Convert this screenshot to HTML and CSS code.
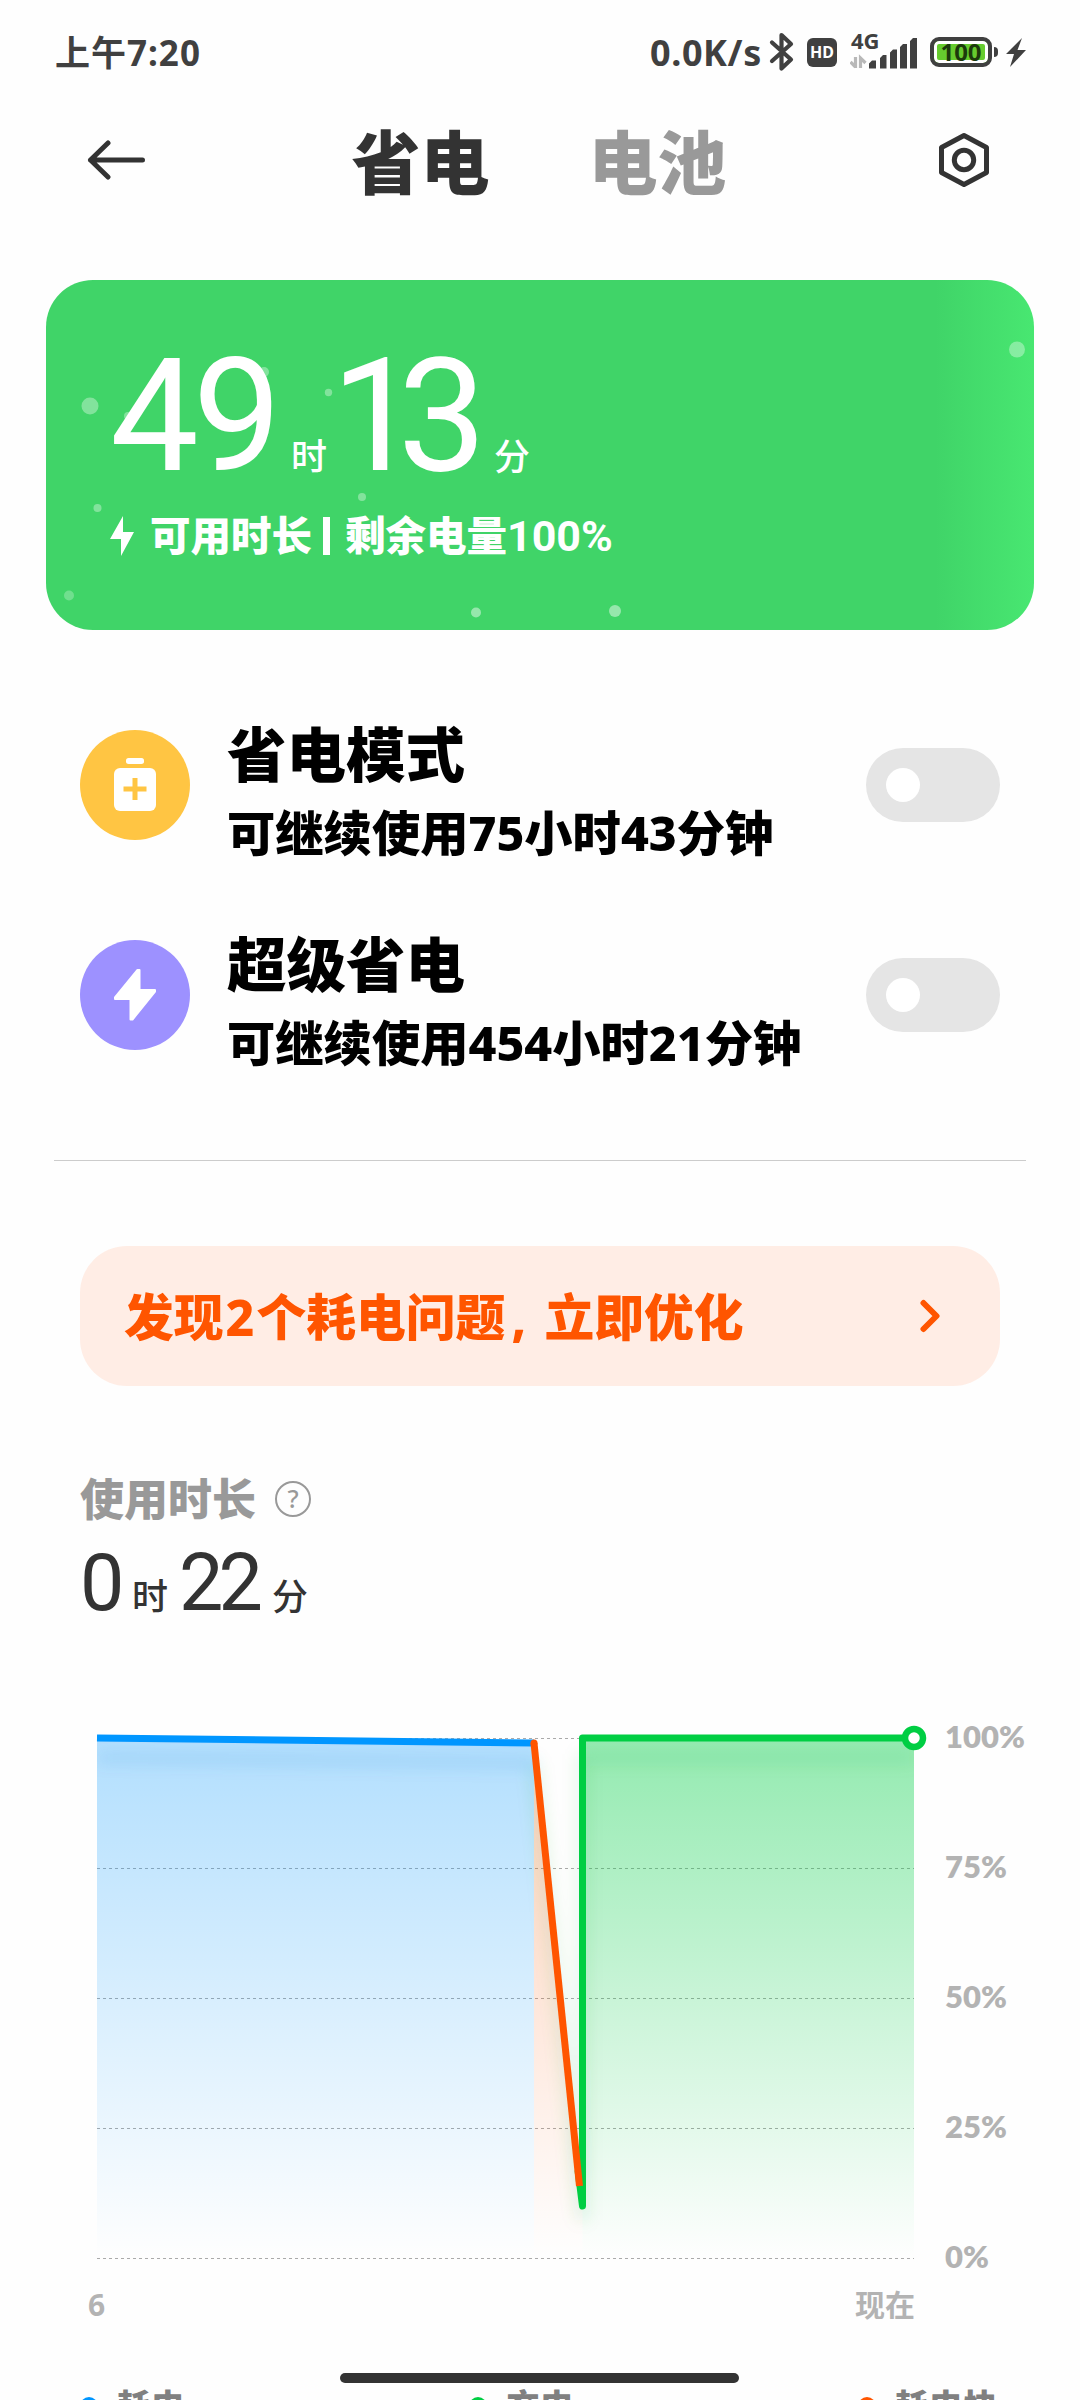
FILE: index.html
```html
<!DOCTYPE html>
<html lang="zh-CN">
<head>
    <meta charset="UTF-8">
    <meta name="viewport" content="width=device-width, initial-scale=1.0">
    <title>省电与电池</title>
    <link rel="stylesheet" href="styles.css">
</head>
<body>

<div class="screen">
    <div class="status-bar">
        <span class="clock">上午7:20</span>
        <div class="status-right">
            <span class="speed">0.0K/s</span>
            <svg class="bluetooth" width="26" height="40" viewBox="0 0 26 40">
                <path d="M3 10.500 L22 27.500 L12.500 36.500 V3 L22 12 L3 29" fill="none" stroke="#404040" stroke-width="4.2" stroke-linecap="round" stroke-linejoin="round"/>
            </svg>
            <span class="hd">HD</span>
            <div class="signal">
                <span class="net">4G</span>
                <svg width="68" height="38" viewBox="0 0 68 38">
                    <path d="M5.500 24 V35 M0.500 29 L5.500 34" stroke="#b8b8b8" stroke-width="3.2" fill="none"/>
                    <path d="M10.500 35 V25 L15.500 30" stroke="#b8b8b8" stroke-width="3.2" fill="none"/>
                    <path d="M19 30.500 L22 27.500 H26 V35.500 H19 Z M30 25 L33 22 H36.500 V35.500 H30 Z M40 19.500 L43 16.500 H47 V35.500 H40 Z M50 14 L53 11 H57 V35.500 H50 Z M60 8 L63 5 H67 V35.500 H60 Z" fill="#404040"/>
                </svg>
            </div>
            <div class="battery"><span>100</span></div>
            <i class="nub"></i>
            <svg class="charge" width="20" height="29" viewBox="0 0 20 29">
                <path d="M16 0 L0 16 H8 L4 29 L20 12 H11.500 Z" fill="#404040"/>
            </svg>
        </div>
    </div>

    <header class="header">
        <svg width="60" height="44" viewBox="0 0 60 44">
            <path d="M21 5 L3.500 22 L21 39 M3.500 22 H55.500" fill="none" stroke="#333" stroke-width="5" stroke-linecap="round" stroke-linejoin="round"/>
        </svg>
        <nav class="tabs">
            <a class="tab active">省电</a>
            <a class="tab">电池</a>
        </nav>
        <svg width="52" height="58" viewBox="0 0 52 58">
            <path d="M26 4.500 L48.500 16.500 V41.500 L26 53.500 L3.500 41.500 V16.500 Z" fill="none" stroke="#333" stroke-width="5" stroke-linejoin="round"/>
            <circle cx="26" cy="29" r="9.700" fill="none" stroke="#333" stroke-width="5"/>
        </svg>
    </header>

    <section class="card">
        <svg class="bubbles" width="988" height="350" viewBox="0 0 988 350">
            <g fill="#fff" fill-opacity="0.35">
                <circle cx="44" cy="126" r="8.500"/>
                <circle cx="82" cy="136" r="4"/>
                <circle cx="218" cy="92" r="5"/>
                <circle cx="282.500" cy="112.500" r="3.700"/>
                <circle cx="316" cy="217" r="4"/>
                <circle cx="51.500" cy="228" r="4"/>
                <circle cx="23" cy="315.500" r="5" fill-opacity="0.25"/>
                <circle cx="430" cy="332.500" r="5" fill-opacity="0.45"/>
                <circle cx="569" cy="331" r="6" fill-opacity="0.45"/>
                <circle cx="971" cy="69.500" r="8"/>
            </g>
        </svg>
        <div class="remain">
            <span class="num hours">49</span><span class="unit">时</span><span class="num minutes">13</span><span class="unit">分</span>
        </div>
        <div class="remain-note">
            <svg width="24" height="40" viewBox="0 0 24 40">
                <path d="M13 0 L0 23 H11 V40 L24 16 H13 Z" fill="#fff"/>
            </svg>
            <span>可用时长</span><i class="bar"></i><span>剩余电量<b>100%</b></span>
        </div>
    </section>

    <section class="modes">
        <div class="mode">
            <div class="mode-icon yellow">
                <svg width="42" height="54" viewBox="0 0 42 54">
                    <rect x="12" y="0" width="18" height="6" rx="2.500" fill="#fff"/>
                    <rect x="0" y="10" width="42" height="43" rx="6" fill="#fff"/>
                    <path d="M21 20 V42 M9.500 31 H32.500" stroke="#ffc543" stroke-width="5"/>
                </svg>
            </div>
            <div class="mode-text">
                <div class="mode-title">省电模式</div>
                <div class="mode-desc">可继续使用75小时43分钟</div>
            </div>
            <div class="switch"></div>
        </div>
        <div class="mode">
            <div class="mode-icon purple">
                <svg width="44" height="54" viewBox="0 0 44 54">
                    <path d="M24.500 2 L2 29.500 V31 H17.500 V51.500 H19.500 L42 23.500 V22 H26.500 V2 Z" fill="#fff" stroke="#fff" stroke-width="2" stroke-linejoin="round"/>
                </svg>
            </div>
            <div class="mode-text">
                <div class="mode-title">超级省电</div>
                <div class="mode-desc">可继续使用454小时21分钟</div>
            </div>
            <div class="switch"></div>
        </div>
    </section>

    <a class="banner">
        <span>发现<b>2</b>个耗电问题<em>,</em>立即优化</span>
        <svg width="22" height="34" viewBox="0 0 22 34">
            <path d="M4.500 4 L17.500 17 L4.500 30" fill="none" stroke="#ff5500" stroke-width="6" stroke-linecap="round" stroke-linejoin="round"/>
        </svg>
    </a>

    <section class="usage">
        <div class="usage-title">
            <span>使用时长</span>
            <i class="help">?</i>
        </div>
        <div class="usage-time">
            <span class="n n-hour">0</span><span class="u">时</span><span class="n n-min">22</span><span class="u">分</span>
        </div>
    </section>

    <section class="chart">
        <svg width="860" height="560" viewBox="0 0 860 560">
            <defs>
                <linearGradient id="blue" x1="0" y1="0" x2="0" y2="1">
                    <stop offset="0" stop-color="#0096ff" stop-opacity="0.3"/>
                    <stop offset="1" stop-color="#0096ff" stop-opacity="0"/>
                </linearGradient>
                <linearGradient id="green" x1="0" y1="0" x2="0" y2="1">
                    <stop offset="0" stop-color="#00cf45" stop-opacity="0.42"/>
                    <stop offset="1" stop-color="#00cf45" stop-opacity="0"/>
                </linearGradient>
                <linearGradient id="orange" x1="0" y1="0" x2="0" y2="1">
                    <stop offset="0" stop-color="#ff5500" stop-opacity="0.28"/>
                    <stop offset="1" stop-color="#ff5500" stop-opacity="0"/>
                </linearGradient>
                <filter id="shadow" filterUnits="userSpaceOnUse" x="-30" y="-10" width="890" height="570">
                    <feGaussianBlur stdDeviation="8"/>
                </filter>
                <clipPath id="plot">
                    <rect x="17" y="0" width="817" height="560"/>
                </clipPath>
            </defs>
            <!-- grid -->
            <path d="M17 18.500 H834 M17 148.500 H834 M17 278.500 H834 M17 408.500 H834 M17 538.500 H834" stroke="#aaa" stroke-width="1" stroke-dasharray="3 3" fill="none"/>
            <!-- areas -->
            <path d="M17 18 L454 23 V538 H17 Z" fill="url(#blue)"/>
            <path d="M454 23 L502.500 490 V538 H454 Z" fill="url(#orange)"/>
            <path d="M502.500 18 H834 V538 H502.500 Z" fill="url(#green)"/>
            <!-- line shadows -->
            <g clip-path="url(#plot)">
                <g filter="url(#shadow)" fill="none" stroke-width="8" stroke-opacity="0.16">
                    <path d="M17 38 L454 43" stroke="#0078c8"/>
                    <path d="M454 43 L500 478 L502.500 500 V38 H834" stroke="#00a83a"/>
                </g>
            </g>
            <!-- lines -->
            <path d="M17 18 L454 23" stroke="#0096ff" stroke-width="7" fill="none"/>
            <path d="M498 450 L502.500 486 V18 H834" stroke="#00ce43" stroke-width="7" stroke-linejoin="round" fill="none"/>
            <path d="M454 23 L499.500 466" stroke="#ff5500" stroke-width="7" fill="none"/>
            <circle cx="454" cy="23" r="3.500" fill="#ff5500"/>
            <circle cx="834" cy="18" r="9" fill="#fff" stroke="#00ce43" stroke-width="6.500"/>
        </svg>
        <div class="percents">
            <span>100%</span>
            <span>75%</span>
            <span>50%</span>
            <span>25%</span>
            <span>0%</span>
        </div>
    </section>
    <div class="times">
        <span>6</span>
        <span>现在</span>
    </div>

    <div class="legend">
        <span class="blue-item">耗电</span>
        <span class="green-item">充电</span>
        <span class="orange-item">耗电快</span>
    </div>
    <div class="home-bar"></div>
</div>

</body>
</html>
```

FILE: styles.css
```css
* {
    box-sizing: border-box;
}
body {
    margin: 0;
    background: #fff;
    font-family: "Noto Sans", "Noto Sans CJK SC", sans-serif;
    color: #333;
}
svg {
    display: block;
    flex: none;
}
.screen {
    position: relative;
    width: 1080px;
    height: 2400px;
    overflow: hidden;
    background: #fefefe;
}

/* status bar */
.status-bar {
    display: flex;
    justify-content: space-between;
    height: 104px;
    padding: 0 54px 0 55px;
    color: #404040;
    font-weight: 700;
    line-height: 105px;
}
.clock {
    font-size: 35px;
    letter-spacing: 1px;
}
.status-right {
    display: flex;
    align-items: center;
}
.speed {
    width: 119px;
    font-size: 36px;
    letter-spacing: 0.6px;
}
.bluetooth {
    margin-right: 12px;
}
.hd {
    width: 30px;
    height: 29px;
    margin-right: 13px;
    border-radius: 6px;
    background: #404040;
    color: #fff;
    font-size: 16px;
    line-height: 29px;
    text-align: center;
}
.signal {
    position: relative;
    margin-right: 12px;
}
.net {
    position: absolute;
    left: 1px;
    top: -5px;
    font-size: 22px;
    line-height: 24px;
}
.battery {
    width: 62px;
    height: 30px;
    border: 4px solid #404040;
    border-radius: 9px;
    background: #66cc2e;
    box-shadow: inset 0 0 0 3px #fff;
    color: #1c3a0c;
    font-size: 24px;
    line-height: 22px;
    text-align: center;
}
.nub {
    width: 4px;
    height: 10px;
    margin: 0 8px 0 2px;
    border-radius: 0 4px 4px 0;
    background: #404040;
}

/* header */
.header {
    display: flex;
    align-items: center;
    justify-content: space-between;
    height: 112px;
    padding: 0 90px 0 87px;
}
.tabs {
    display: flex;
    gap: 99px;
    margin-right: 7px;
    padding-top: 4px;
}
.tab {
    color: #999;
    font-size: 69px;
    font-weight: 900;
    line-height: 112px;
}
.tab.active {
    color: #333;
}

/* remaining time card */
.card {
    position: relative;
    height: 350px;
    margin: 64px 46px 0;
    padding: 60px 64px 0;
    border-radius: 47px;
    background: linear-gradient(90deg, #40d468 90%, #48e771 100%);
    color: #fff;
}
.bubbles {
    position: absolute;
    left: 0;
    top: 0;
}
.remain {
    position: relative;
    display: flex;
    align-items: baseline;
    height: 150px;
    padding-top: 1px;
    line-height: 150px;
}
.num {
    font-family: Roboto, sans-serif;
    font-size: 158px;
    letter-spacing: -6px;
}
.hours {
    width: 181px;
}
.minutes {
    width: 163px;
    margin-left: 4px;
    letter-spacing: -22px;
}
.unit {
    width: 36px;
    font-size: 36px;
    font-weight: 500;
}
.remain-note {
    position: relative;
    display: flex;
    align-items: center;
    height: 60px;
    margin-top: 16px;
    font-size: 40.5px;
    font-weight: 800;
    line-height: 60px;
}
.remain-note svg {
    margin-right: 16px;
}
.remain-note .bar {
    width: 7px;
    height: 38px;
    margin: 0 15px 0 11px;
    background: #fff;
}
.remain-note b {
    font-family: Roboto, sans-serif;
    font-size: 43px;
    font-weight: 700;
}

/* power saving modes */
.modes {
    margin: 0 54px;
    padding: 60px 26px 0;
    height: 531px;
    border-bottom: 1px solid #ccc;
}
.mode {
    display: flex;
    align-items: center;
    height: 190px;
    margin-bottom: 20px;
}
.mode-icon {
    display: flex;
    align-items: center;
    justify-content: center;
    width: 110px;
    height: 110px;
    margin-right: 37px;
    border-radius: 50%;
}
.yellow {
    background: #ffc543;
}
.purple {
    background: #9d91ff;
}
.mode-text {
    flex: 1;
    padding-top: 15px;
    color: #000;
    white-space: nowrap;
}
.mode-title {
    font-size: 59.5px;
    font-weight: 900;
    line-height: 78px;
}
.mode-desc {
    font-size: 48.3px;
    font-weight: 800;
    line-height: 78px;
}
.switch {
    width: 134px;
    height: 74px;
    padding: 20px;
    border-radius: 37px;
    background: #e5e5e5;
}
.switch::before {
    content: "";
    display: block;
    width: 34px;
    height: 34px;
    border-radius: 50%;
    background: #fff;
}

.banner {
    display: flex;
    align-items: center;
    justify-content: space-between;
    height: 140px;
    margin: 85px 80px 0;
    padding: 0 59px 3px 44px;
    border-radius: 47px;
    background: #ffede5;
    color: #ff5500;
    font-size: 49.8px;
    font-weight: 800;
}
.banner svg {
    margin-top: 3px;
}
.banner b {
    padding: 0 2px;
    font-weight: 800;
}
.banner em {
    display: inline-block;
    width: 39px;
    padding-left: 6px;
    font-style: normal;
}

/* usage time */
.usage {
    padding: 82px 80px 0;
}
.usage-title {
    display: flex;
    align-items: center;
    height: 62px;
    color: #999;
    font-size: 44px;
    font-weight: 800;
    line-height: 62px;
}
.help {
    width: 36px;
    height: 36px;
    margin-left: 19px;
    border: 2.5px solid #999;
    border-radius: 50%;
    font-size: 25px;
    font-style: normal;
    font-weight: 500;
    line-height: 31px;
    text-align: center;
}
.usage-time {
    display: flex;
    align-items: baseline;
    height: 100px;
    padding-top: 3px;
    line-height: 100px;
}
.n {
    font-family: Roboto, sans-serif;
    font-size: 79px;
    letter-spacing: -5px;
}
.n-hour {
    width: 52px;
}
.n-min {
    width: 91px;
    margin-left: -2px;
    margin-right: 2px;
}
.u {
    width: 49px;
    font-size: 36px;
    font-weight: 500;
}

/* chart */
.chart {
    display: flex;
    height: 560px;
    margin: 90px 0 0 80px;
}
.percents {
    margin: -49px 0 0 5px;
    color: #b3b3b3;
    font-family: Lato, sans-serif;
    font-size: 31px;
    font-weight: 800;
}
.percents span {
    display: block;
    height: 130px;
    line-height: 130px;
}
.times {
    display: flex;
    justify-content: space-between;
    width: 827px;
    margin-left: 88px;
    color: #b3b3b3;
    font-size: 30px;
    font-weight: 700;
    line-height: 50px;
}

/* legend goes under the bottom edge of the screen */
.legend {
    display: flex;
    justify-content: space-between;
    margin: 56px 83px 0 80px;
    color: #808080;
    font-size: 34px;
    font-weight: 800;
    line-height: 40px;
}
.legend span {
    display: flex;
    align-items: center;
}
.legend span::before {
    content: "";
    width: 18px;
    height: 18px;
    margin-right: 19px;
    border-radius: 50%;
}
.legend .blue-item::before {
    background: #0096ff;
}
.legend .green-item::before {
    background: #00ce43;
}
.legend .orange-item::before {
    background: #ff5500;
}
.home-bar {
    position: absolute;
    left: 340px;
    bottom: 17px;
    width: 399px;
    height: 10px;
    border-radius: 5px;
    background: #333;
}
```
